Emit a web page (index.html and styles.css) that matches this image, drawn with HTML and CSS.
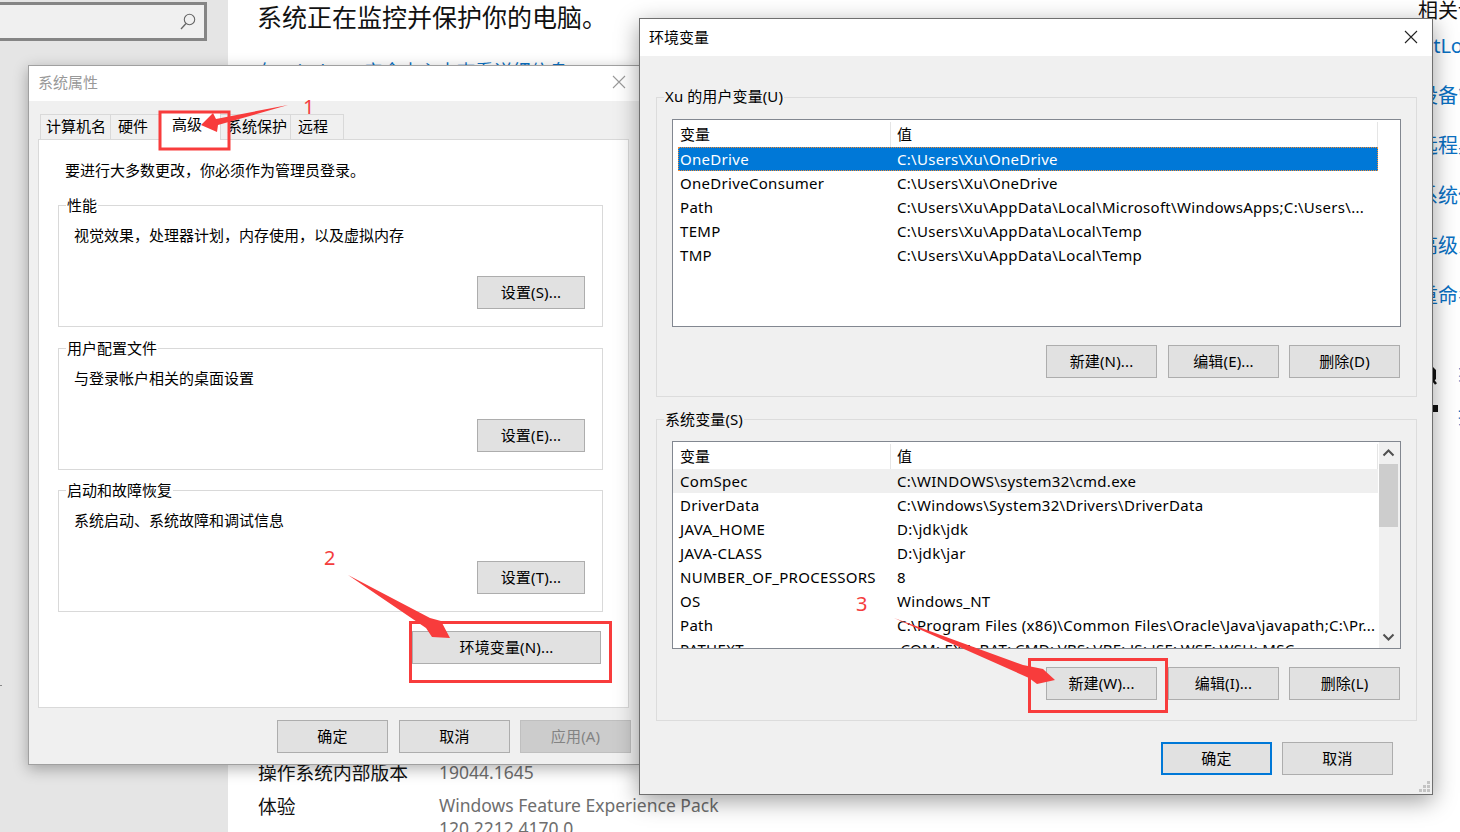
FILE: index.html
```html
<!DOCTYPE html>
<html lang="zh-CN">
<head>
<meta charset="utf-8">
<title>环境变量</title>
<link rel="stylesheet" href="styles.css">
</head>
<body>
<div class="settings">
  <nav class="sidebar">
    <div class="search">
      <svg class="search-icon" width="16" height="17" viewBox="0 0 16 17"><circle cx="9.5" cy="6.5" r="5.2" fill="none" stroke="#666" stroke-width="1.1"/><path d="M6 10.5 1 16" stroke="#666" stroke-width="1.3" fill="none"/></svg>
    </div>
    <div class="sidebar-tick"></div>
  </nav>
  <main class="main">
    <h1 class="headline">系统正在监控并保护你的电脑。</h1>
    <a class="main-link">在 Windows 安全中心中查看详细信息</a>
    <dl class="specs">
      <dt>操作系统内部版本</dt><dd>19044.1645</dd>
      <dt>体验</dt><dd>Windows Feature Experience Pack<br>120.2212.4170.0</dd>
    </dl>
  </main>
  <aside class="related">
    <div class="related-title">相关设置</div>
    <a class="related-link">BitLocker 设置</a>
    <a class="related-link">设备管理器</a>
    <a class="related-link">远程桌面</a>
    <a class="related-link">系统保护</a>
    <a class="related-link">高级系统设置</a>
    <a class="related-link">重命名这台电脑</a>
    <div class="help-row help-first">
      <svg width="20" height="20" viewBox="0 0 20 20"><path d="M3 2h12l3 3v9l-3 3h-3l-2-2h3l2-2V6l-2-2H4z" fill="#111"/><path d="M14 14l4 5" stroke="#111" stroke-width="2.5"/></svg>
      <a>获取帮助</a>
    </div>
    <div class="help-row">
      <svg width="20" height="20" viewBox="0 0 20 20"><rect x="12" y="0" width="8" height="7" fill="#111"/></svg>
      <a>提供反馈</a>
    </div>
  </aside>
</div>

<section class="win win-sys">
  <header class="win-title win-title-off">
    <span>系统属性</span>
    <svg class="close" width="14" height="14" viewBox="0 0 14 14"><path d="M1 1l12 12M13 1 1 13" stroke="#9a9a9a" stroke-width="1.1"/></svg>
  </header>
  <div class="sys-body">
    <div class="tabs">
      <span class="tab">计算机名</span>
      <span class="tab">硬件</span>
      <span class="tab tab-on">高级</span>
      <span class="tab">系统保护</span>
      <span class="tab">远程</span>
    </div>
    <div class="page">
      <p class="page-note">要进行大多数更改，你必须作为管理员登录。</p>
      <div class="box">
        <div class="box-title">性能</div>
        <p class="box-text">视觉效果，处理器计划，内存使用，以及虚拟内存</p>
        <div class="box-actions"><button class="btn btn-set">设置(S)...</button></div>
      </div>
      <div class="box box-second">
        <div class="box-title">用户配置文件</div>
        <p class="box-text">与登录帐户相关的桌面设置</p>
        <div class="box-actions"><button class="btn btn-set">设置(E)...</button></div>
      </div>
      <div class="box box-third">
        <div class="box-title">启动和故障恢复</div>
        <p class="box-text">系统启动、系统故障和调试信息</p>
        <div class="box-actions"><button class="btn btn-set">设置(T)...</button></div>
      </div>
      <div class="env-action"><button class="btn btn-env">环境变量(N)...</button></div>
    </div>
    <div class="sys-footer">
      <button class="btn">确定</button>
      <button class="btn">取消</button>
      <button class="btn btn-off btn-last">应用(A)</button>
    </div>
  </div>
</section>

<section class="win win-env">
  <header class="win-title">
    <span>环境变量</span>
    <svg class="close close-env" width="14" height="14" viewBox="0 0 14 14"><path d="M1 1l12 12M13 1 1 13" stroke="#222" stroke-width="1.1"/></svg>
  </header>
  <div class="env-body">
    <div class="vars vars-user">
      <div class="vars-title">Xu 的用户变量(U)</div>
      <div class="list">
        <div class="list-main">
          <div class="list-head"><span class="head-name">变量</span><span class="head-value">值</span></div>
          <div class="row row-sel"><span class="cell-name">OneDrive</span><span class="cell-value">C:\Users\Xu\OneDrive</span></div>
          <div class="row"><span class="cell-name">OneDriveConsumer</span><span class="cell-value">C:\Users\Xu\OneDrive</span></div>
          <div class="row"><span class="cell-name">Path</span><span class="cell-value">C:\Users\Xu\AppData\Local\Microsoft\WindowsApps;C:\Users\...</span></div>
          <div class="row"><span class="cell-name">TEMP</span><span class="cell-value">C:\Users\Xu\AppData\Local\Temp</span></div>
          <div class="row"><span class="cell-name">TMP</span><span class="cell-value">C:\Users\Xu\AppData\Local\Temp</span></div>
        </div>
      </div>
      <div class="vars-actions">
        <button class="btn">新建(N)...</button>
        <button class="btn">编辑(E)...</button>
        <button class="btn btn-last">删除(D)</button>
      </div>
    </div>
    <div class="vars vars-system">
      <div class="vars-title">系统变量(S)</div>
      <div class="list">
        <div class="list-main">
          <div class="list-head"><span class="head-name">变量</span><span class="head-value">值</span></div>
          <div class="row row-hover"><span class="cell-name">ComSpec</span><span class="cell-value">C:\WINDOWS\system32\cmd.exe</span></div>
          <div class="row"><span class="cell-name">DriverData</span><span class="cell-value">C:\Windows\System32\Drivers\DriverData</span></div>
          <div class="row"><span class="cell-name">JAVA_HOME</span><span class="cell-value">D:\jdk\jdk</span></div>
          <div class="row"><span class="cell-name">JAVA-CLASS</span><span class="cell-value">D:\jdk\jar</span></div>
          <div class="row"><span class="cell-name">NUMBER_OF_PROCESSORS</span><span class="cell-value">8</span></div>
          <div class="row"><span class="cell-name">OS</span><span class="cell-value">Windows_NT</span></div>
          <div class="row"><span class="cell-name">Path</span><span class="cell-value">C:\Program Files (x86)\Common Files\Oracle\Java\javapath;C:\Pr...</span></div>
          <div class="row"><span class="cell-name">PATHEXT</span><span class="cell-value">.COM;.EXE;.BAT;.CMD;.VBS;.VBE;.JS;.JSE;.WSF;.WSH;.MSC</span></div>
        </div>
        <div class="scrollbar">
          <svg class="scroll-arrow" width="21" height="22" viewBox="0 0 21 22"><path d="M4.500 13.500 9.500 8.500l5 5" fill="none" stroke="#505050" stroke-width="2"/></svg>
          <div class="scroll-thumb"></div>
          <svg class="scroll-arrow scroll-down" width="21" height="22" viewBox="0 0 21 22"><path d="M4.500 8.500 9.500 13.500l5-5" fill="none" stroke="#505050" stroke-width="2"/></svg>
        </div>
      </div>
      <div class="vars-actions">
        <button class="btn">新建(W)...</button>
        <button class="btn">编辑(I)...</button>
        <button class="btn btn-last">删除(L)</button>
      </div>
    </div>
    <div class="env-footer">
      <button class="btn btn-primary">确定</button>
      <button class="btn">取消</button>
    </div>
    <svg class="grip" width="12" height="12" viewBox="0 0 12 12"><path d="M8 0h3v3H8zM4 4h3v3H4zM8 4h3v3H8zM0 8h3v3H0zM4 8h3v3H4zM8 8h3v3H8z" fill="#c4c4c4"/></svg>
  </div>
</section>

<svg class="marks" width="1460" height="832" viewBox="0 0 1460 832">
  <rect x="160" y="112" width="69" height="37" class="mark-box"/>
  <rect x="410.500" y="622.500" width="200" height="59" class="mark-box"/>
  <rect x="1029.500" y="659.500" width="137" height="52" class="mark-box"/>
  <polygon points="288,105 216,119 213,113 201,125 217,132 218,125" class="mark-arrow"/>
  <polygon points="348,575 430,618 441,621 450,638 432,637 426,628" class="mark-arrow"/>
  <polygon points="894,618 1023,665 1043,669 1055,680 1037,684 1029,678" class="mark-arrow"/>
</svg>
<span class="mark-num mark-1">1</span>
<span class="mark-num mark-2">2</span>
<span class="mark-num mark-3">3</span>
</body>
</html>
```
FILE: styles.css
```css
* { box-sizing: border-box; }
html, body { margin: 0; height: 100%; }
body {
  position: relative;
  width: 1460px;
  height: 832px;
  overflow: hidden;
  background: #fff;
  color: #000;
  font-family: "Noto Sans", "Noto Sans CJK SC", sans-serif;
  font-size: 15px;
}
p, h1, dl, dd, dt { margin: 0; }

/* Settings page behind the dialogs */
.settings { display: flex; height: 832px; }
.sidebar { width: 228px; flex: none; background: #e5e5e5; padding-top: 2px; }
.search {
  width: 207px; height: 39px;
  border: 3px solid #858585; border-left: 0;
  background: #f0f0f0;
  display: flex; align-items: center; justify-content: flex-end;
  padding-right: 8px;
}
.sidebar-tick { width: 2px; height: 1px; margin-top: 644px; background: #888; }
.main { width: 1190px; flex: none; padding-left: 30px; overflow: hidden; }
.headline { font-size: 25px; font-weight: 400; line-height: 34px; color: #111; margin-left: -1px; }
.main-link { display: block; margin: 23px 0 0 -1px; font-size: 18.5px; line-height: 28px; color: #0a70c2; }
.specs {
  display: grid; grid-template-columns: 181px 1fr; row-gap: 10px;
  margin-top: 676px; font-size: 18.75px; line-height: 24px; color: #111;
}
.specs dd { font-size: 17.5px; line-height: 23px; color: #6e6e6e; }
.specs dd + dt + dd { margin-top: -1px; }
.related { flex: none; width: 200px; padding-top: 1px; font-size: 20px; white-space: nowrap; }
.related-title { line-height: 20px; color: #111; }
.related-link { display: block; color: #0a70c2; line-height: 28px; margin-top: 22px; }
.related-link:first-of-type { margin: 11px 0 0 -3px; }
.help-row { display: flex; align-items: center; gap: 20px; height: 20px; margin-top: 20px; color: #0a70c2; }
.help-first { margin-top: 55px; }
.help-row svg { flex: none; }

/* Windows */
.win { position: absolute; display: flex; flex-direction: column; background: #f0f0f0; }
.win-sys {
  left: 28px; top: 65px; width: 612px; height: 700px;
  border: 1px solid #a0a0a0;
  box-shadow: 0 4px 14px rgba(0,0,0,.3);
}
.win-env {
  left: 639px; top: 18px; width: 794px; height: 777px;
  border: 1px solid #6f6f6f;
  box-shadow: 0 6px 22px rgba(0,0,0,.38);
}
.win-title {
  display: flex; align-items: center; justify-content: space-between;
  height: 37px; flex: none; background: #fff; padding: 0 14px 2px 9px; font-size: 15px;
}
.win-sys .win-title { height: 35px; padding-right: 13px; padding-bottom: 5px; }
.win-title-off { color: #999; }
.win-sys .close { margin-top: 2px; }

/* System properties */
.sys-body { flex: 1; display: flex; flex-direction: column; }
.tabs { display: flex; padding: 13px 0 0 11px; height: 38px; align-items: flex-end; }
.tab {
  height: 25px; padding: 0 5px; line-height: 22px; white-space: nowrap;
  border: 1px solid #d9d9d9; border-bottom: 0; border-left: 0; background: #f0f0f0;
}
.tab:first-child { border-left: 1px solid #d9d9d9; width: 71px; }
.tab:nth-child(2) { width: 49px; padding-left: 7px; }
.tab-on { width: 61px; background: #fff; margin-bottom: -1px; height: 28px; padding-left: 12px; position: relative; }
.tab:nth-child(4) { width: 70px; padding-left: 6px; }
.tab:nth-child(5) { width: 53px; padding-left: 7px; }
.page {
  margin-left: 9px; width: 591px; height: 569px;
  border: 1px solid #d9d9d9; background: #fff;
  padding: 20px 0 0 19px;
}
.page-note { margin-left: 7px; line-height: 20px; height: 20px; }
.box {
  width: 545px; height: 122px; margin-top: 25px;
  border: 1px solid #d9d9d9; padding: 0 17px 0 15px;
}
.box-second { margin-top: 21px; }
.box-third { margin-top: 20px; }
.box-title {
  width: fit-content; height: 20px; line-height: 20px;
  margin: -11px 0 0 -8px; padding: 0 1px; background: #fff;
}
.box-text { margin-top: 10px; line-height: 20px; height: 20px; }
.box-actions { display: flex; justify-content: flex-end; margin-top: 31px; }
.env-action { display: flex; justify-content: flex-end; width: 543px; margin-top: 19px; }
.sys-footer { display: flex; justify-content: flex-end; gap: 11px; margin-top: 12px; padding-right: 8px; }

/* Buttons */
.btn {
  width: 111px; height: 33px; padding: 0 0 2px;
  border: 1px solid #adadad; background: #e1e1e1;
  font: inherit; color: #000; letter-spacing: .15px;
}
.btn-set { width: 108px; }
.btn-env { width: 189px; }
.btn-off { color: #838383; background: #ccc; border-color: #bfbfbf; }
.btn-primary { border: 2px solid #0078d7; }
.btn-last { margin-left: -1px; }

/* Environment variables */
.env-body { flex: 1; position: relative; padding: 41px 15px 0 16px; }
.vars { width: 761px; border: 1px solid #dcdcdc; padding: 0 15px; height: 300px; }
.vars-system { height: 302px; margin-top: 22px; }
.vars-title {
  width: fit-content; height: 20px; line-height: 20px; letter-spacing: .1px;
  margin: -12px 0 0 -8px; padding: 0 1px; background: #f0f0f0;
}
.vars-system .vars-title { margin-top: -11px; }
.list {
  display: flex; width: 729px; height: 208px; margin-top: 12px;
  border: 1px solid #828790; background: #fff; overflow: hidden;
}
.vars-user .list { margin-top: 13px; }
.list-main { width: 705px; flex: none; }
.list-head { display: flex; height: 27px; padding-top: 2px; line-height: 24px; }
.head-name { width: 218px; padding-left: 7px; border-right: 1px solid #e5e5e5; }
.head-value { width: 487px; padding-left: 6px; border-right: 1px solid #e5e5e5; }
.row { display: flex; height: 24px; margin-left: 5px; line-height: 24px; white-space: nowrap; letter-spacing: .3px; }
.row-sel { background: #0078d7; color: #fff; outline: 1px dotted #f28a30; outline-offset: -1px; }
.row-hover { background: #efefef; margin-left: 0; padding-left: 5px; }
.cell-name { width: 219px; padding-left: 2px; flex: none; }
.cell-value { flex: 1; }
.scrollbar {
  position: relative; width: 21px; margin-left: 1px;
  background: #f0f0f0; flex: none;
}
.scroll-arrow { display: block; }
.scroll-thumb { width: 19px; height: 63px; background: #cdcdcd; }
.scroll-down { position: absolute; left: 0; bottom: 0; }
.vars-actions { display: flex; justify-content: flex-end; gap: 11px; margin-top: 18px; padding-right: 1px; }
.env-footer { display: flex; justify-content: flex-end; gap: 10px; margin-top: 21px; padding-right: 24px; }
.grip { position: absolute; right: 1px; bottom: 1px; }

/* Red annotations */
.marks { position: absolute; left: 0; top: 0; pointer-events: none; }
.mark-box { fill: none; stroke: #f83c3c; stroke-width: 3; }
.mark-arrow { fill: #f83c3c; }
.mark-num { position: absolute; color: #f43d3d; font-size: 20px; line-height: 20px; }
.mark-1 { left: 303px; top: 97px; }
.mark-2 { left: 324px; top: 548px; }
.mark-3 { left: 856px; top: 594px; }
```
